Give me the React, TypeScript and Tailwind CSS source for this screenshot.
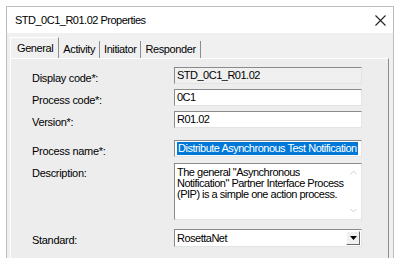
import { ChevronUp, ChevronDown } from "lucide-react";

const font = { fontFamily: '"Liberation Sans", Arial, sans-serif' };

function Field({ children, disabled }: { children: React.ReactNode; disabled?: boolean }) {
  return (
    <div
      className={`h-[17px] w-[188px] border border-t-[#8a8a8a] border-l-[#8a8a8a] border-r-[#e3e3e3] border-b-[#e3e3e3] flex items-center pl-[2px] text-[11px] tracking-[-0.5px] whitespace-nowrap overflow-hidden text-black leading-none ${
        disabled ? "bg-[#f0f0f0]" : "bg-white"
      }`}
    >
      {children}
    </div>
  );
}

function Label({ children }: { children: React.ReactNode }) {
  return <span className="h-[17px] leading-[17px] pt-[3px] box-content -mb-[3px]">{children}</span>;
}

function Tab({ label, active }: { label: string; active?: boolean }) {
  return (
    <div
      className={`flex items-center border-r border-r-[#8d8d8d] text-[11px] tracking-[-0.4px] text-black ${
        active
          ? "h-[21px] border-l border-l-white border-t border-t-white bg-[#f0f0f0] pl-[6px] pr-[5px]"
          : "h-[17px] px-[4px]"
      }`}
    >
      {label}
    </div>
  );
}

export default function App() {
  return (
    <div className="w-[400px] h-[258px] bg-white overflow-hidden pt-[6px] pl-[6px]" style={font}>
      <div className="w-[388px] h-[260px] border border-[#bdbdbd] bg-[#f0f0f0]">
        {/* title bar */}
        <div className="h-[26px] bg-white flex items-center justify-between pl-[8px] pr-[7px]">
          <span className="text-[11px] tracking-[-0.5px] text-black">STD_0C1_R01.02 Properties</span>
          <svg width="11" height="11" viewBox="0 0 11 11">
            <path d="M0.5 0.5 L10.5 10.5 M10.5 0.5 L0.5 10.5" stroke="#222" strokeWidth="1.1" />
          </svg>
        </div>

        <div className="pl-[3px] pr-[4px] pt-[4px]">
          {/* tabs */}
          <div className="flex items-end h-[21px]">
            <Tab label="General" active />
            <Tab label="Activity" />
            <Tab label="Initiator" />
            <Tab label="Responder" />
          </div>

          {/* panel */}
          <div className="h-[220px] border-l border-l-white border-t border-t-white border-r border-r-[#8d8d8d] bg-[#ededed] pl-[21px] pt-[8px] text-[11px] tracking-[-0.3px] text-black">
            <div className="grid grid-cols-[142px_188px] items-start gap-y-[5px]">
              <Label>Display code*:</Label>
              <Field disabled>STD_0C1_R01.02</Field>
              <Label>Process code*:</Label>
              <Field>0C1</Field>
              <Label>Version*:</Label>
              <Field>R01.02</Field>
            </div>

            <div className="grid grid-cols-[142px_188px] items-start mt-[12px]">
              <Label>Process name*:</Label>
              <Field>
                <span className="bg-[#0078d7] text-white px-[1px] leading-[13px]">
                  Distribute Asynchronous Test Notification
                </span>
              </Field>
              <span className="mt-[6px] pt-[4px] leading-[13px]">Description:</span>
              <div className="mt-[6px] h-[57px] w-[188px] border border-t-[#8a8a8a] border-l-[#8a8a8a] border-r-[#e3e3e3] border-b-[#e3e3e3] bg-white flex">
                <div className="flex-1 pl-[2px] pt-[3px] leading-[11px] tracking-[-0.5px] whitespace-nowrap">
                  The general "Asynchronous
                  <br />
                  Notification" Partner Interface Process
                  <br />
                  (PIP) is a simple one action process.
                </div>
                <div className="w-[16px] flex flex-col justify-between items-center py-[3px] text-[#c8c8c8]">
                  <ChevronUp size={11} strokeWidth={2} />
                  <ChevronDown size={11} strokeWidth={2} />
                </div>
              </div>
              <span className="mt-[9px] h-[18px] leading-[18px] pt-[2px] box-content -mb-[2px]">Standard:</span>
              <div className="mt-[9px] h-[18px] w-[188px] border border-t-[#8a8a8a] border-l-[#8a8a8a] border-r-[#e3e3e3] border-b-[#e3e3e3] bg-white flex items-center">
                <span className="flex-1 pl-[2px] leading-none tracking-[-0.5px]">RosettaNet</span>
                <div className="w-[14px] h-[14px] mr-[1px] bg-[#f0f0f0] border border-t-white border-l-white border-r-[#696969] border-b-[#696969] flex items-center justify-center">
                  <svg width="7" height="4" viewBox="0 0 7 4">
                    <path d="M0 0 H7 L3.5 4 Z" fill="#000" />
                  </svg>
                </div>
              </div>
            </div>
          </div>
        </div>
      </div>
    </div>
  );
}
